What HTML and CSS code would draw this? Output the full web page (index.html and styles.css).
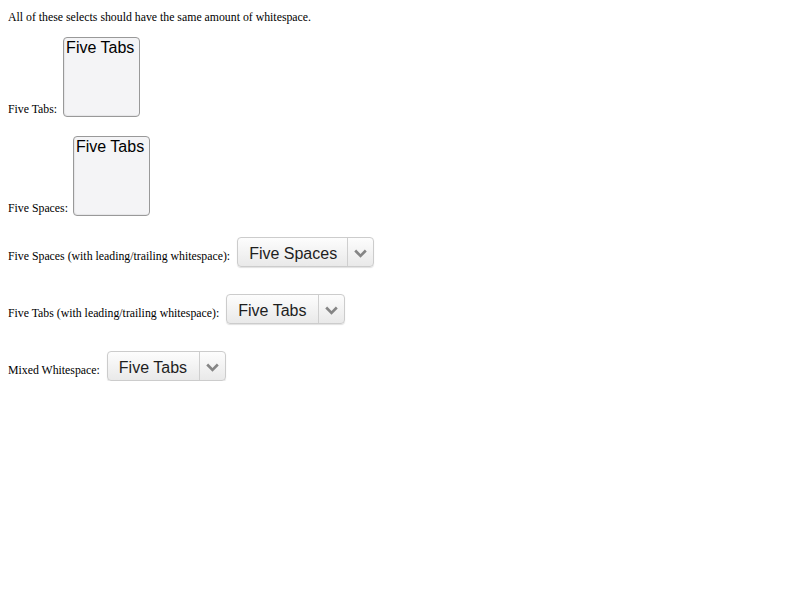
FILE: index.html
```html
<!DOCTYPE html>
<html>
<head>
<meta charset="utf-8">
<link rel="stylesheet" href="styles.css">
</head>
<body>
<p class="intro">All of these selects should have the same amount of whitespace.</p>

<div class="row row-list first">
  <span class="label">Five Tabs:</span>
  <div class="listbox"><div class="option">Five Tabs</div></div>
</div>

<div class="row row-list second">
  <span class="label">Five Spaces:</span>
  <div class="listbox"><div class="option">Five Tabs</div></div>
</div>

<div class="row row-drop third">
  <span class="label">Five Spaces (with leading/trailing whitespace):</span>
  <div class="dropdown wide">
    <span class="value">Five Spaces</span>
    <span class="arrow"><svg width="13" height="9" viewBox="0 0 13 9"><path d="M1.2 1.5 L6.5 7 L11.8 1.5" fill="none" stroke="#858585" stroke-width="2.6"/></svg></span>
  </div>
</div>

<div class="row row-drop fourth">
  <span class="label">Five Tabs (with leading/trailing whitespace):</span>
  <div class="dropdown">
    <span class="value">Five Tabs</span>
    <span class="arrow"><svg width="13" height="9" viewBox="0 0 13 9"><path d="M1.2 1.5 L6.5 7 L11.8 1.5" fill="none" stroke="#858585" stroke-width="2.6"/></svg></span>
  </div>
</div>

<div class="row row-drop fifth">
  <span class="label">Mixed Whitespace:</span>
  <div class="dropdown">
    <span class="value">Five Tabs</span>
    <span class="arrow"><svg width="13" height="9" viewBox="0 0 13 9"><path d="M1.2 1.5 L6.5 7 L11.8 1.5" fill="none" stroke="#858585" stroke-width="2.6"/></svg></span>
  </div>
</div>
</body>
</html>
```

FILE: styles.css
```css
html, body {
  background: #ffffff;
}
body {
  margin: 8px;
  font-family: "Liberation Serif", "Times New Roman", serif;
  font-size: 11.8px;
  color: #000;
}
.intro {
  margin: 0;
  padding-top: 2px;
  line-height: 14px;
}
.row {
  display: flex;
}
.row-list {
  align-items: flex-end;
}
.row-drop {
  align-items: center;
}
.first { margin-top: 13px; }
.second { margin-top: 19px; }
.third { margin-top: 21px; }
.fourth { margin-top: 27px; }
.fifth { margin-top: 27px; }

.label {
  line-height: 14px;
}
.row-list .label {
  margin-right: 5px;
  padding-bottom: 1px;
}
.first .label {
  margin-right: 6px;
}
.row-drop .label {
  margin-right: 7px;
  padding-top: 8px;
}
.listbox {
  box-sizing: border-box;
  width: 77px;
  height: 80px;
  border: 1px solid #999999;
  border-radius: 4px;
  background: #f4f4f6;
  box-shadow: inset 1px -1px 1px rgba(0,0,0,0.06);
  font-family: "Liberation Sans", Arial, sans-serif;
  font-size: 16px;
  color: #000000;
  padding: 1px 2px;
}
.option {
  line-height: 18px;
  white-space: nowrap;
}
.dropdown {
  box-sizing: border-box;
  width: 119px;
  height: 30px;
  display: flex;
  border: 1px solid #cccccc;
  border-radius: 4px;
  background: linear-gradient(#fdfdfd, #e9e9e9);
  box-shadow: 0 1px 1px rgba(0,0,0,0.12);
  font-family: "Liberation Sans", Arial, sans-serif;
  font-size: 16px;
  color: #1e1e1e;
}
.dropdown.wide {
  width: 137px;
}
.value {
  flex: 1;
  padding-left: 11px;
  padding-top: 3px;
  line-height: 25px;
  white-space: nowrap;
}
.arrow {
  width: 25px;
  border-left: 1px solid #cfcfcf;
  display: flex;
  align-items: center;
  justify-content: center;
}
.arrow svg {
  display: block;
  margin-top: 2px;
}
```
